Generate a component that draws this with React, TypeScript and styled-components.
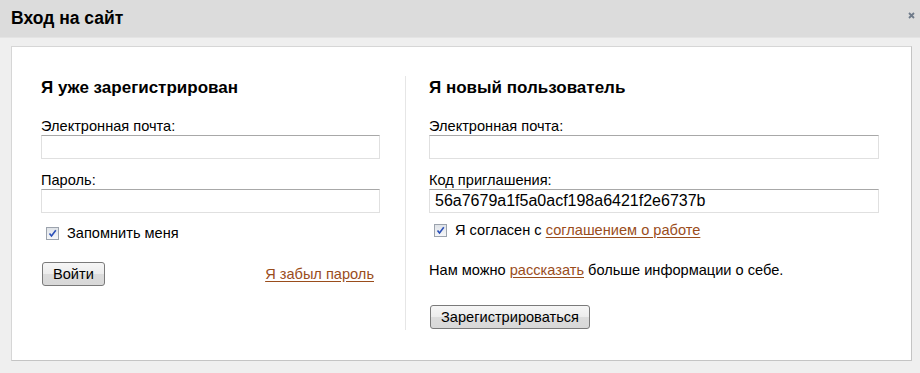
import styled, { createGlobalStyle } from "styled-components";

const GlobalStyle = createGlobalStyle`
  html, body {
    margin: 0;
    padding: 0;
    background: #efefef;
    font-family: "Liberation Sans", Arial, sans-serif;
    color: #000;
  }
`;

const Dialog = styled.div`
  width: 920px;
  height: 373px;
  background: #efefef;
  display: flex;
  flex-direction: column;
`;

const Header = styled.div`
  height: 38px;
  background: #dcdcdc;
  border-bottom: 1px solid #e4e4e4;
  display: flex;
  align-items: center;
  justify-content: space-between;
  padding: 0 4px 0 11px;
  box-sizing: border-box;
`;

const Title = styled.h1`
  margin: 0;
  font-size: 17.5px;
  font-weight: bold;
  padding-bottom: 1px;
`;

const Close = styled.button`
  border: 0;
  background: none;
  padding: 0;
  width: 10px;
  height: 10px;
  margin-top: -7px;
  display: flex;
  align-items: center;
  justify-content: center;
  cursor: pointer;
`;

const Panel = styled.div`
  margin: 8px 8px 0 11px;
  height: 315px;
  box-sizing: border-box;
  background: #fff;
  border: 1px solid #d6d6d6;
  border-right-color: #c4c4c4;
  border-bottom-color: #c4c4c4;
  display: grid;
  grid-template-columns: 364px 1fr;
  padding: 29px 32px 0 29px;
`;

const Column = styled.div<{ $divided?: boolean }>`
  display: flex;
  flex-direction: column;
  height: 254px;
  padding-right: ${(p) => (p.$divided ? 0 : 25)}px;
  ${(p) => p.$divided && `border-left: 1px solid #e6e6e6; padding-left: 23px;`}
`;

const Heading = styled.h2`
  margin: 0 0 13px;
  padding-top: 2px;
  font-size: 17px;
  font-weight: bold;
  line-height: 19px;
`;

const Label = styled.label<{ $top?: number }>`
  display: block;
  font-size: 14.6px;
  line-height: 16px;
  margin-top: ${(p) => p.$top ?? 8}px;
  margin-bottom: 1px;
`;

const Input = styled.input`
  display: block;
  box-sizing: border-box;
  width: 100%;
  height: 24px;
  margin: 0;
  border: 1px solid #e0e0e0;
  border-top-color: #a8a8a8;
  padding: 1px 5px 2px;
  font-family: "Liberation Sans", Arial, sans-serif;
  font-size: 16px;
  color: #000;
  outline: none;
`;

const CheckRow = styled.label<{ $top: number }>`
  display: flex;
  align-items: center;
  gap: 8px;
  margin-top: ${(p) => p.$top}px;
  padding-left: 5px;
  font-size: 14.6px;
  line-height: 16px;
`;

const Box = styled.span`
  width: 11px;
  height: 11px;
  border: 1px solid #9ca3ad;
  background: linear-gradient(#dfe3e8, #f6f7f9);
  display: flex;
  align-items: center;
  justify-content: center;
  flex: none;
`;

const Link = styled.a`
  color: #9a4d1c;
  text-decoration: underline;
  text-underline-offset: 2px;
  cursor: pointer;
`;

const Button = styled.button`
  font-family: "Liberation Sans", Arial, sans-serif;
  font-size: 14.6px;
  color: #000;
  height: 24px;
  padding: 0 10px;
  border: 1px solid #7a7a7a;
  border-radius: 3px;
  background: linear-gradient(#f6f6f6 0%, #ececec 50%, #dcdcdc 51%, #d8d8d8 100%);
  cursor: pointer;
`;

const ActionRow = styled.div`
  display: flex;
  align-items: center;
  justify-content: space-between;
  margin-top: 21px;
  padding: 0 6px 0 1px;
  font-size: 14.6px;
`;

const Text = styled.p`
  margin: 24px 0 0;
  font-size: 14.6px;
  line-height: 16px;
`;

const ButtonRow = styled.div`
  margin-top: 27px;
  padding-left: 1px;
`;

function CheckMark() {
  return (
    <Box>
      <svg width="9" height="9" viewBox="0 0 9 9">
        <path d="M1.5 4.5 L3.5 7 L7.8 1.2" fill="none" stroke="#2a4fb8" strokeWidth="1.6" />
      </svg>
    </Box>
  );
}

export default function App() {
  return (
    <>
      <GlobalStyle />
      <Dialog>
        <Header>
          <Title>Вход на сайт</Title>
          <Close aria-label="Закрыть">
            <svg width="7" height="7" viewBox="0 0 7 7">
              <path d="M1 1 L6 6 M6 1 L1 6" stroke="#6f7b8a" strokeWidth="1.8" />
            </svg>
          </Close>
        </Header>
        <Panel>
          <Column>
            <Heading>Я уже зарегистрирован</Heading>
            <Label>Электронная почта:</Label>
            <Input />
            <Label $top={13}>Пароль:</Label>
            <Input type="password" />
            <CheckRow $top={12}>
              <CheckMark />
              Запомнить меня
            </CheckRow>
            <ActionRow>
              <Button>Войти</Button>
              <Link>Я забыл пароль</Link>
            </ActionRow>
          </Column>
          <Column $divided>
            <Heading>Я новый пользователь</Heading>
            <Label>Электронная почта:</Label>
            <Input />
            <Label $top={13}>Код приглашения:</Label>
            <Input defaultValue="56a7679a1f5a0acf198a6421f2e6737b" />
            <CheckRow $top={9}>
              <CheckMark />
              <span>
                Я согласен с <Link>соглашением о работе</Link>
              </span>
            </CheckRow>
            <Text>
              Нам можно <Link>рассказать</Link> больше информации о себе.
            </Text>
            <ButtonRow>
              <Button>Зарегистрироваться</Button>
            </ButtonRow>
          </Column>
        </Panel>
      </Dialog>
    </>
  );
}
